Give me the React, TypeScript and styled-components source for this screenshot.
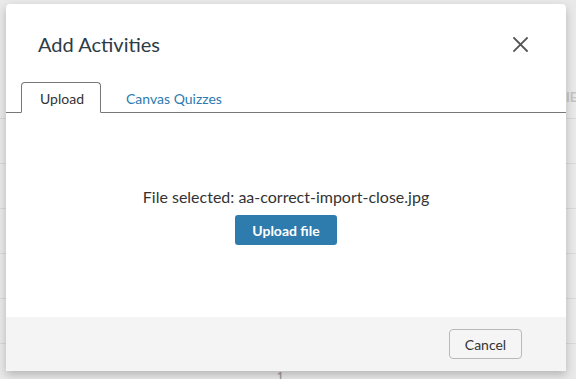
import React from "react";
import styled, { createGlobalStyle } from "styled-components";

const Global = createGlobalStyle`
  html, body { margin: 0; padding: 0; }
  body {
    width: 576px;
    height: 379px;
    overflow: hidden;
    font-family: Lato, "Open Sans", "Liberation Sans", sans-serif;
    background: #e8e8e8;
  }
  * { box-sizing: border-box; }
`;

const Page = styled.div`
  position: relative;
  width: 576px;
  height: 379px;
  overflow: hidden;
  background: #e9e9e9;
`;

const BackTable = styled.div`
  display: flex;
  flex-direction: column;
  padding-top: 74px;
`;

const BackRow = styled.div`
  height: 45px;
  border-bottom: 1px solid #d9d9d9;
  display: flex;
  align-items: center;
  padding-left: 566px;
  overflow: hidden;
  white-space: nowrap;
`;

const BackHeading = styled.span`
  color: #c4c4c4;
  font-size: 13px;
  font-weight: 700;
  margin-top: 2px;
`;

const PageNumber = styled.div`
  position: absolute;
  left: 277px;
  top: 369px;
  color: #9a9a9a;
  font-size: 11px;
  font-weight: 700;
`;

const Dialog = styled.div`
  position: absolute;
  left: 6px;
  top: 4px;
  width: 560px;
  height: 367px;
  background: #fff;
  border-radius: 4px 4px 0 0;
  box-shadow: 0 4px 10px rgba(0, 0, 0, 0.22);
  display: flex;
  flex-direction: column;
`;

const Header = styled.div`
  display: flex;
  justify-content: space-between;
  align-items: flex-start;
  padding: 28px 38px 0 32px;
  height: 78px;
`;

const Title = styled.h2`
  margin: 0;
  font-size: 20px;
  font-weight: 400;
  color: #2d3b45;
  line-height: 24px;
`;

const CloseButton = styled.button`
  border: none;
  background: none;
  padding: 0;
  margin-top: 4px;
  width: 16px;
  height: 16px;
  display: flex;
  align-items: center;
  justify-content: center;
  cursor: pointer;
`;

const TabList = styled.div`
  display: flex;
  align-items: flex-end;
  padding-left: 15px;
  border-bottom: 1px solid #777;
  height: 31px;
`;

const Tab = styled.div<{ $active?: boolean }>`
  height: ${(p) => (p.$active ? "31px" : "30px")};
  padding: ${(p) => (p.$active ? "2px 16px 0 18px" : "2px 20px 0 24px")};
  display: flex;
  align-items: center;
  font-size: 14px;
  color: ${(p) => (p.$active ? "#333" : "#2d7bb0")};
  border: ${(p) => (p.$active ? "1px solid #777" : "1px solid transparent")};
  border-bottom: ${(p) => (p.$active ? "1px solid #fff" : "none")};
  border-radius: 4px 4px 0 0;
  margin-bottom: ${(p) => (p.$active ? "-1px" : "0")};
  background: #fff;
`;

const Body = styled.div`
  flex: 1;
  display: flex;
  flex-direction: column;
  align-items: center;
  padding-top: 74px;
`;

const FileText = styled.div`
  font-size: 16px;
  color: #333;
  line-height: 20px;
`;

const PrimaryButton = styled.button`
  margin-top: 8px;
  width: 102px;
  height: 30px;
  border: none;
  border-radius: 3px;
  background: #2e7bad;
  color: #fff;
  font-family: inherit;
  font-weight: 700;
  font-size: 14px;
  padding: 0;
`;

const Footer = styled.div`
  height: 54px;
  background: #f4f4f4;
  display: flex;
  justify-content: flex-end;
  align-items: flex-start;
  padding: 12px 44px 0 0;
`;

const SecondaryButton = styled.button`
  width: 73px;
  height: 30px;
  border: 1px solid #b8b8b8;
  border-radius: 4px;
  background: #f5f5f5;
  color: #333;
  font-family: inherit;
  font-size: 14px;
  padding: 0;
`;

export default function App() {
  return (
    <>
      <Global />
      <Page>
        <BackTable>
          <BackRow>
            <BackHeading>IE</BackHeading>
          </BackRow>
          <BackRow />
          <BackRow />
          <BackRow />
          <BackRow />
          <BackRow />
        </BackTable>
        <PageNumber>1</PageNumber>
        <Dialog>
          <Header>
            <Title>Add Activities</Title>
            <CloseButton aria-label="Close">
              <svg width="15" height="15" viewBox="0 0 15 15">
                <path d="M1 1 L14 14 M14 1 L1 14" stroke="#555" strokeWidth="1.8" strokeLinecap="square" />
              </svg>
            </CloseButton>
          </Header>
          <TabList>
            <Tab $active>Upload</Tab>
            <Tab>Canvas Quizzes</Tab>
          </TabList>
          <Body>
            <FileText>File selected: aa-correct-import-close.jpg</FileText>
            <PrimaryButton>Upload file</PrimaryButton>
          </Body>
          <Footer>
            <SecondaryButton>Cancel</SecondaryButton>
          </Footer>
        </Dialog>
      </Page>
    </>
  );
}
